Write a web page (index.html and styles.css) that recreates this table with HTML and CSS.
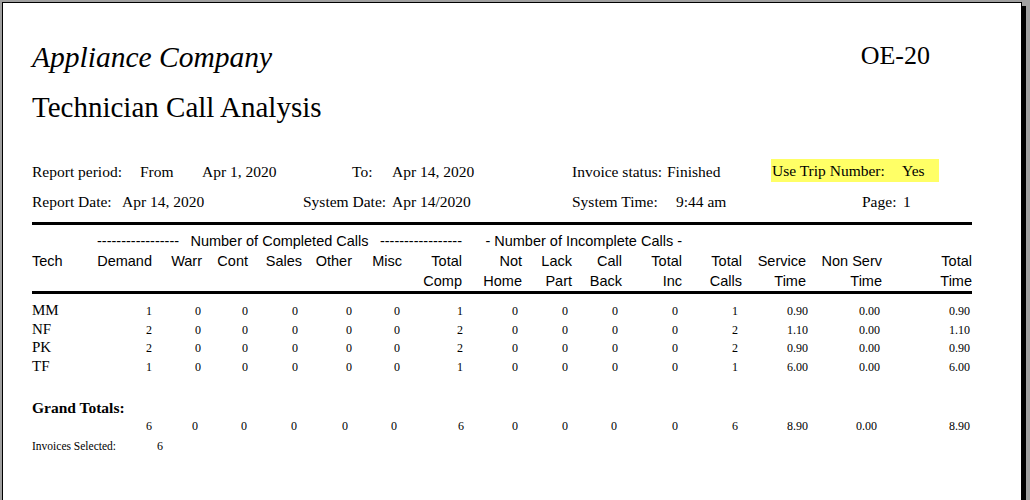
FILE: index.html
```html
<!DOCTYPE html>
<html>
<head>
<meta charset="utf-8">
<title>Technician Call Analysis</title>
<link rel="stylesheet" href="styles.css">
</head>
<body>
<div class="page">
  <div class="top">
    <div class="company">Appliance Company</div>
    <div class="code">OE-20</div>
  </div>
  <div class="title">Technician Call Analysis</div>

  <div class="meta">
    <div class="meta-row row1">
      <span>Report period:</span>
      <span>From</span>
      <span>Apr 1, 2020</span>
      <span>To:</span>
      <span>Apr 14, 2020</span>
      <span>Invoice status:</span>
      <span>Finished</span>
      <span class="hl"><span class="hl-label">Use Trip Number:</span><span>Yes</span></span>
    </div>
    <div class="meta-row row2">
      <span>Report Date:</span>
      <span>Apr 14, 2020</span>
      <span>System Date:</span>
      <span>Apr 14/2020</span>
      <span>System Time:</span>
      <span>9:44 am</span>
      <span>Page:</span>
      <span>1</span>
    </div>
  </div>

  <div class="thead">
    <div></div>
    <div class="span-c"><span>-----------------</span><span>Number of Completed Calls</span><span>-----------------</span></div>
    <div class="span-i">- Number of Incomplete Calls -</div>
    <div></div><div></div><div></div><div></div>

    <div class="left">Tech</div>
    <div>Demand</div><div>Warr</div><div>Cont</div><div>Sales</div><div>Other</div><div>Misc</div><div>Total</div>
    <div>Not</div><div>Lack</div><div>Call</div><div>Total</div><div>Total</div><div>Service</div><div>Non Serv</div><div>Total</div>

    <div></div><div></div><div></div><div></div><div></div><div></div><div></div><div>Comp</div>
    <div>Home</div><div>Part</div><div>Back</div><div>Inc</div><div>Calls</div><div>Time</div><div>Time</div><div>Time</div>
  </div>

  <div class="tbody">
    <div class="drow">
      <div class="tech">MM</div><div>1</div><div>0</div><div>0</div><div>0</div><div>0</div><div>0</div><div>1</div><div>0</div><div>0</div><div>0</div><div>0</div><div>1</div><div>0.90</div><div>0.00</div><div>0.90</div>
    </div>
    <div class="drow">
      <div class="tech">NF</div><div>2</div><div>0</div><div>0</div><div>0</div><div>0</div><div>0</div><div>2</div><div>0</div><div>0</div><div>0</div><div>0</div><div>2</div><div>1.10</div><div>0.00</div><div>1.10</div>
    </div>
    <div class="drow">
      <div class="tech">PK</div><div>2</div><div>0</div><div>0</div><div>0</div><div>0</div><div>0</div><div>2</div><div>0</div><div>0</div><div>0</div><div>0</div><div>2</div><div>0.90</div><div>0.00</div><div>0.90</div>
    </div>
    <div class="drow">
      <div class="tech">TF</div><div>1</div><div>0</div><div>0</div><div>0</div><div>0</div><div>0</div><div>1</div><div>0</div><div>0</div><div>0</div><div>0</div><div>1</div><div>6.00</div><div>0.00</div><div>6.00</div>
    </div>
  </div>

  <div class="gt-label">Grand Totals:</div>
  <div class="trow">
    <div></div><div>6</div><div>0</div><div>0</div><div>0</div><div>0</div><div>0</div><div>6</div><div>0</div><div>0</div><div>0</div><div>0</div><div>6</div><div>8.90</div><div>0.00</div><div>8.90</div>
  </div>
  <div class="invoices">
    <span class="inv-label">Invoices Selected:</span>
    <span class="inv-value">6</span>
  </div>
</div>
</body>
</html>
```

FILE: styles.css
```css
html, body {
  margin: 0;
  height: 100%;
  overflow: hidden;
}

body {
  background: #a0a0a0;
}

.page {
  box-sizing: border-box;
  margin: 2px 0 0 2px;
  width: 1020px;
  height: 620px;
  background: #fff;
  border: 1px solid #000;
  box-shadow: 4px 4px 0 #000;
  padding: 38px 49px 0 29px;
  font-family: "Liberation Serif", "Times New Roman", serif;
  color: #000;
}

.top {
  display: flex;
  justify-content: space-between;
  align-items: flex-start;
}

.company {
  font-size: 29.5px;
  font-style: italic;
  line-height: 32px;
}

.code {
  font-size: 26px;
  line-height: 30px;
  margin-right: 42px;
}

.title {
  font-size: 29px;
  line-height: 32px;
  margin-top: 18px;
}

.meta {
  margin-top: 34px;
  font-size: 15.5px;
  line-height: 30px;
}

.meta-row {
  display: grid;
  white-space: nowrap;
}

.row1 {
  grid-template-columns: 108px 62px 150px 40px 180px 95px 104px 168px;
}

.row2 {
  grid-template-columns: 90px 181px 89px 180px 104px 186px 41px auto;
}

.hl {
  box-sizing: border-box;
  display: flex;
  align-self: start;
  margin-top: 2px;
  height: 23px;
  padding: 1px 0 0 1px;
  line-height: 22px;
  background: #ffff66;
}

.hl-label {
  width: 130px;
}

.thead {
  margin-top: 5px;
  border-top: 3px solid #000;
  border-bottom: 3px solid #000;
  padding-top: 6px;
  display: grid;
  grid-template-columns: 60px 60px 50px 46px 54px 50px 50px 60px 60px 50px 50px 60px 60px 64px 76px 90px;
  font-family: "Liberation Sans", Arial, sans-serif;
  font-size: 14.5px;
  line-height: 20px;
  text-align: right;
  white-space: nowrap;
}

.thead .left {
  text-align: left;
}

.span-c {
  grid-column: span 7;
  display: flex;
  justify-content: space-between;
  margin-left: 5px;
}

.span-i {
  grid-column: span 4;
  text-align: right;
}

.tbody {
  padding-top: 7px;
}

.drow,
.trow {
  display: grid;
  align-items: baseline;
  text-align: right;
  font-size: 12px;
  white-space: nowrap;
}

.drow {
  grid-template-columns: 60px 60px 49px 47px 50px 54px 48px 63px 55px 50px 50px 60px 60px 70px 72px 90px;
  height: 18.5px;
  line-height: 18px;
}

.drow .tech {
  text-align: left;
  font-size: 15px;
}

.gt-label {
  margin-top: 23px;
  font-size: 15.5px;
  font-weight: bold;
  line-height: 19px;
}

.trow {
  grid-template-columns: 60px 60px 46px 49px 50px 51px 49px 67px 54px 50px 49px 61px 60px 70px 69px 93px;
  line-height: 18px;
}

.invoices {
  display: flex;
  align-items: baseline;
  margin-top: 1.5px;
  line-height: 18px;
}

.inv-label {
  width: 125px;
  font-size: 11.5px;
}

.inv-value {
  font-size: 12px;
}
```
